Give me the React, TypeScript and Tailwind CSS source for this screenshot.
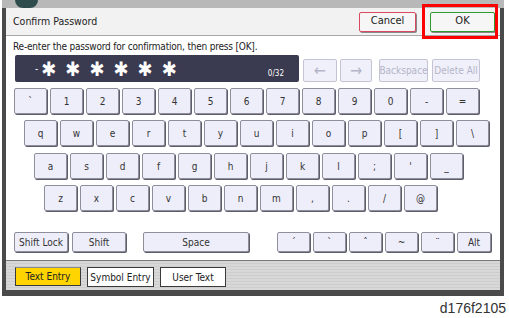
import React from "react";

const row1 = ["`", "1", "2", "3", "4", "5", "6", "7", "8", "9", "0", "-", "="];
const row2 = ["q", "w", "e", "r", "t", "y", "u", "i", "o", "p", "[", "]", "\\"];
const row3 = ["a", "s", "d", "f", "g", "h", "j", "k", "l", ";", "'", "_"];
const row4 = ["z", "x", "c", "v", "b", "n", "m", ",", ".", "/", "@"];
const accents = ["´", "`", "ˆ", "~", "¨"];

const Key = ({ label, className = "w-[33px]" }: { label: string; className?: string }) => (
    <div
        className={`${className} h-full flex items-center justify-center bg-[#eeeefa] border border-[#8e8e9c] rounded-[2px] shadow-[1px_1px_0_#5e5e6a] text-[10px] text-[#333]`}
    >
        {label}
    </div>
);

const DimKey = ({ label, className }: { label: React.ReactNode; className: string }) => (
    <div
        className={`${className} h-full flex items-center justify-center bg-[#f0f0fa] border border-[#c4c4d4] rounded-[2px] text-[10px] text-[#b4b4c8]`}
    >
        {label}
    </div>
);

const KeyRow = ({ keys, offset }: { keys: string[]; offset: string }) => (
    <div className={`flex gap-[3px] h-[26px] ${offset}`}>
        {keys.map((k, i) => (
            <Key key={i} label={k} />
        ))}
    </div>
);

export default function App() {
    return (
        <div className="w-[509px] h-[318px] bg-white relative overflow-hidden [font-family:'DejaVu_Sans_Condensed','DejaVu_Sans','Liberation_Sans',sans-serif] font-stretch-condensed">
            {/* device frame */}
            <div className="ml-[2px] w-[502px] h-[296px] bg-[#4a4a4a] flex flex-col pl-[4px] pr-[4px] pb-[6px]">
                {/* top strip */}
                <div className="h-[8px] -mx-[4px] bg-[#b8b8b8] flex">
                    <div className="ml-[13px] w-[23px] h-[8px] rounded-b-full bg-[#2e4c4c]" />
                </div>

                <div className="flex-1 bg-white flex flex-col">
                    {/* title bar */}
                    <div className="h-[28px] bg-[#f2f2f2] border-b border-[#a8a8a8] flex items-center pl-[7px] pr-[5px]">
                        <span className="text-[10.5px] text-[#222]">Confirm Password</span>
                        <div className="ml-auto w-[57px] h-[20px] border border-[#d84a62] rounded-[2px] bg-[#f6f6f6] shadow-[1px_1px_0_#888] flex items-center justify-center text-[11px] text-[#222]">
                            Cancel
                        </div>
                        <div className="ml-[14px] w-[65px] h-[20px] border border-[#2f9a2f] rounded-[2px] bg-[#f6f6f6] shadow-[1px_1px_0_#888] flex items-center justify-center text-[11px] text-[#222]">
                            OK
                        </div>
                    </div>

                    {/* instruction */}
                    <div className="h-[19px] pl-[7px] pt-[3px] text-[10px] tracking-[-0.2px] text-[#222] leading-[16px]">
                        Re-enter the password for confirmation, then press [OK].
                    </div>

                    {/* password row */}
                    <div className="h-[27px] flex items-end pl-[9px]">
                        <div className="w-[284px] h-[27px] bg-[#3a3a50] rounded-[2px] flex items-center pl-[20px] pr-[15px] text-white">
                            <span className="text-[10px] mr-[3px]">-</span>
                            <span className="text-[20px] font-bold tracking-[9px] leading-none">✱✱✱✱✱✱</span>
                            <span className="ml-auto mt-[10px] text-[8px]">0/32</span>
                        </div>
                        <div className="ml-[4px] h-[23px] flex gap-[3px]">
                            <DimKey className="w-[34px] text-[16px]" label="←" />
                            <DimKey className="w-[32px] text-[16px]" label="→" />
                            <DimKey className="ml-[4px] w-[49px]" label="Backspace" />
                            <DimKey className="ml-[1px] w-[48px]" label="Delete All" />
                        </div>
                    </div>

                    {/* keyboard */}
                    <div className="mt-[6px] flex flex-col">
                        <KeyRow keys={row1} offset="ml-[8px]" />
                        <KeyRow keys={row2} offset="ml-[18px] mt-[6px]" />
                        <KeyRow keys={row3} offset="ml-[28px] mt-[7px]" />
                        <KeyRow keys={row4} offset="ml-[38px] mt-[6px]" />
                    </div>

                    {/* bottom row */}
                    <div className="mt-[21px] h-[20px] flex ml-[8px]">
                        <Key label="Shift Lock" className="w-[54px]" />
                        <Key label="Shift" className="ml-[4px] w-[54px]" />
                        <Key label="Space" className="ml-[17px] w-[106px]" />
                        <div className="ml-[28px] flex gap-[3px] h-full">
                            {accents.map((a, i) => (
                                <Key key={i} label={a} />
                            ))}
                            <Key label="Alt" className="w-[34px]" />
                        </div>
                    </div>

                    {/* tab bar */}
                    <div className="mt-[8px] flex-1 bg-[repeating-linear-gradient(180deg,#d8d8d8_0px,#d8d8d8_2px,#cdcdcd_2px,#cdcdcd_3px)] border-t border-[#777] flex items-start pt-[6px] pl-[9px] gap-[6px]">
                        <div className="w-[66px] h-[19px] bg-[#ffd400] border border-[#3a3a3a] border-t-[#8a8a8a] flex items-center justify-center text-[10px] text-[#222]">
                            Text Entry
                        </div>
                        <div className="w-[67px] h-[20px] bg-white border border-[#3a3a3a] flex items-center justify-center text-[10px] text-[#222]">
                            Symbol Entry
                        </div>
                        <div className="w-[66px] h-[20px] bg-white border border-[#3a3a3a] flex items-center justify-center text-[10px] text-[#222]">
                            User Text
                        </div>
                    </div>
                </div>
            </div>

            {/* annotation highlight */}
            <div className="absolute left-[422px] top-[4px] w-[76px] h-[35px] border-[3px] border-[#ff0000]" />

            <div className="absolute right-[3px] top-[300px] text-[14px] text-[#333] [font-family:'Liberation_Sans',sans-serif] leading-[16px]">
                d176f2105
            </div>
        </div>
    );
}
